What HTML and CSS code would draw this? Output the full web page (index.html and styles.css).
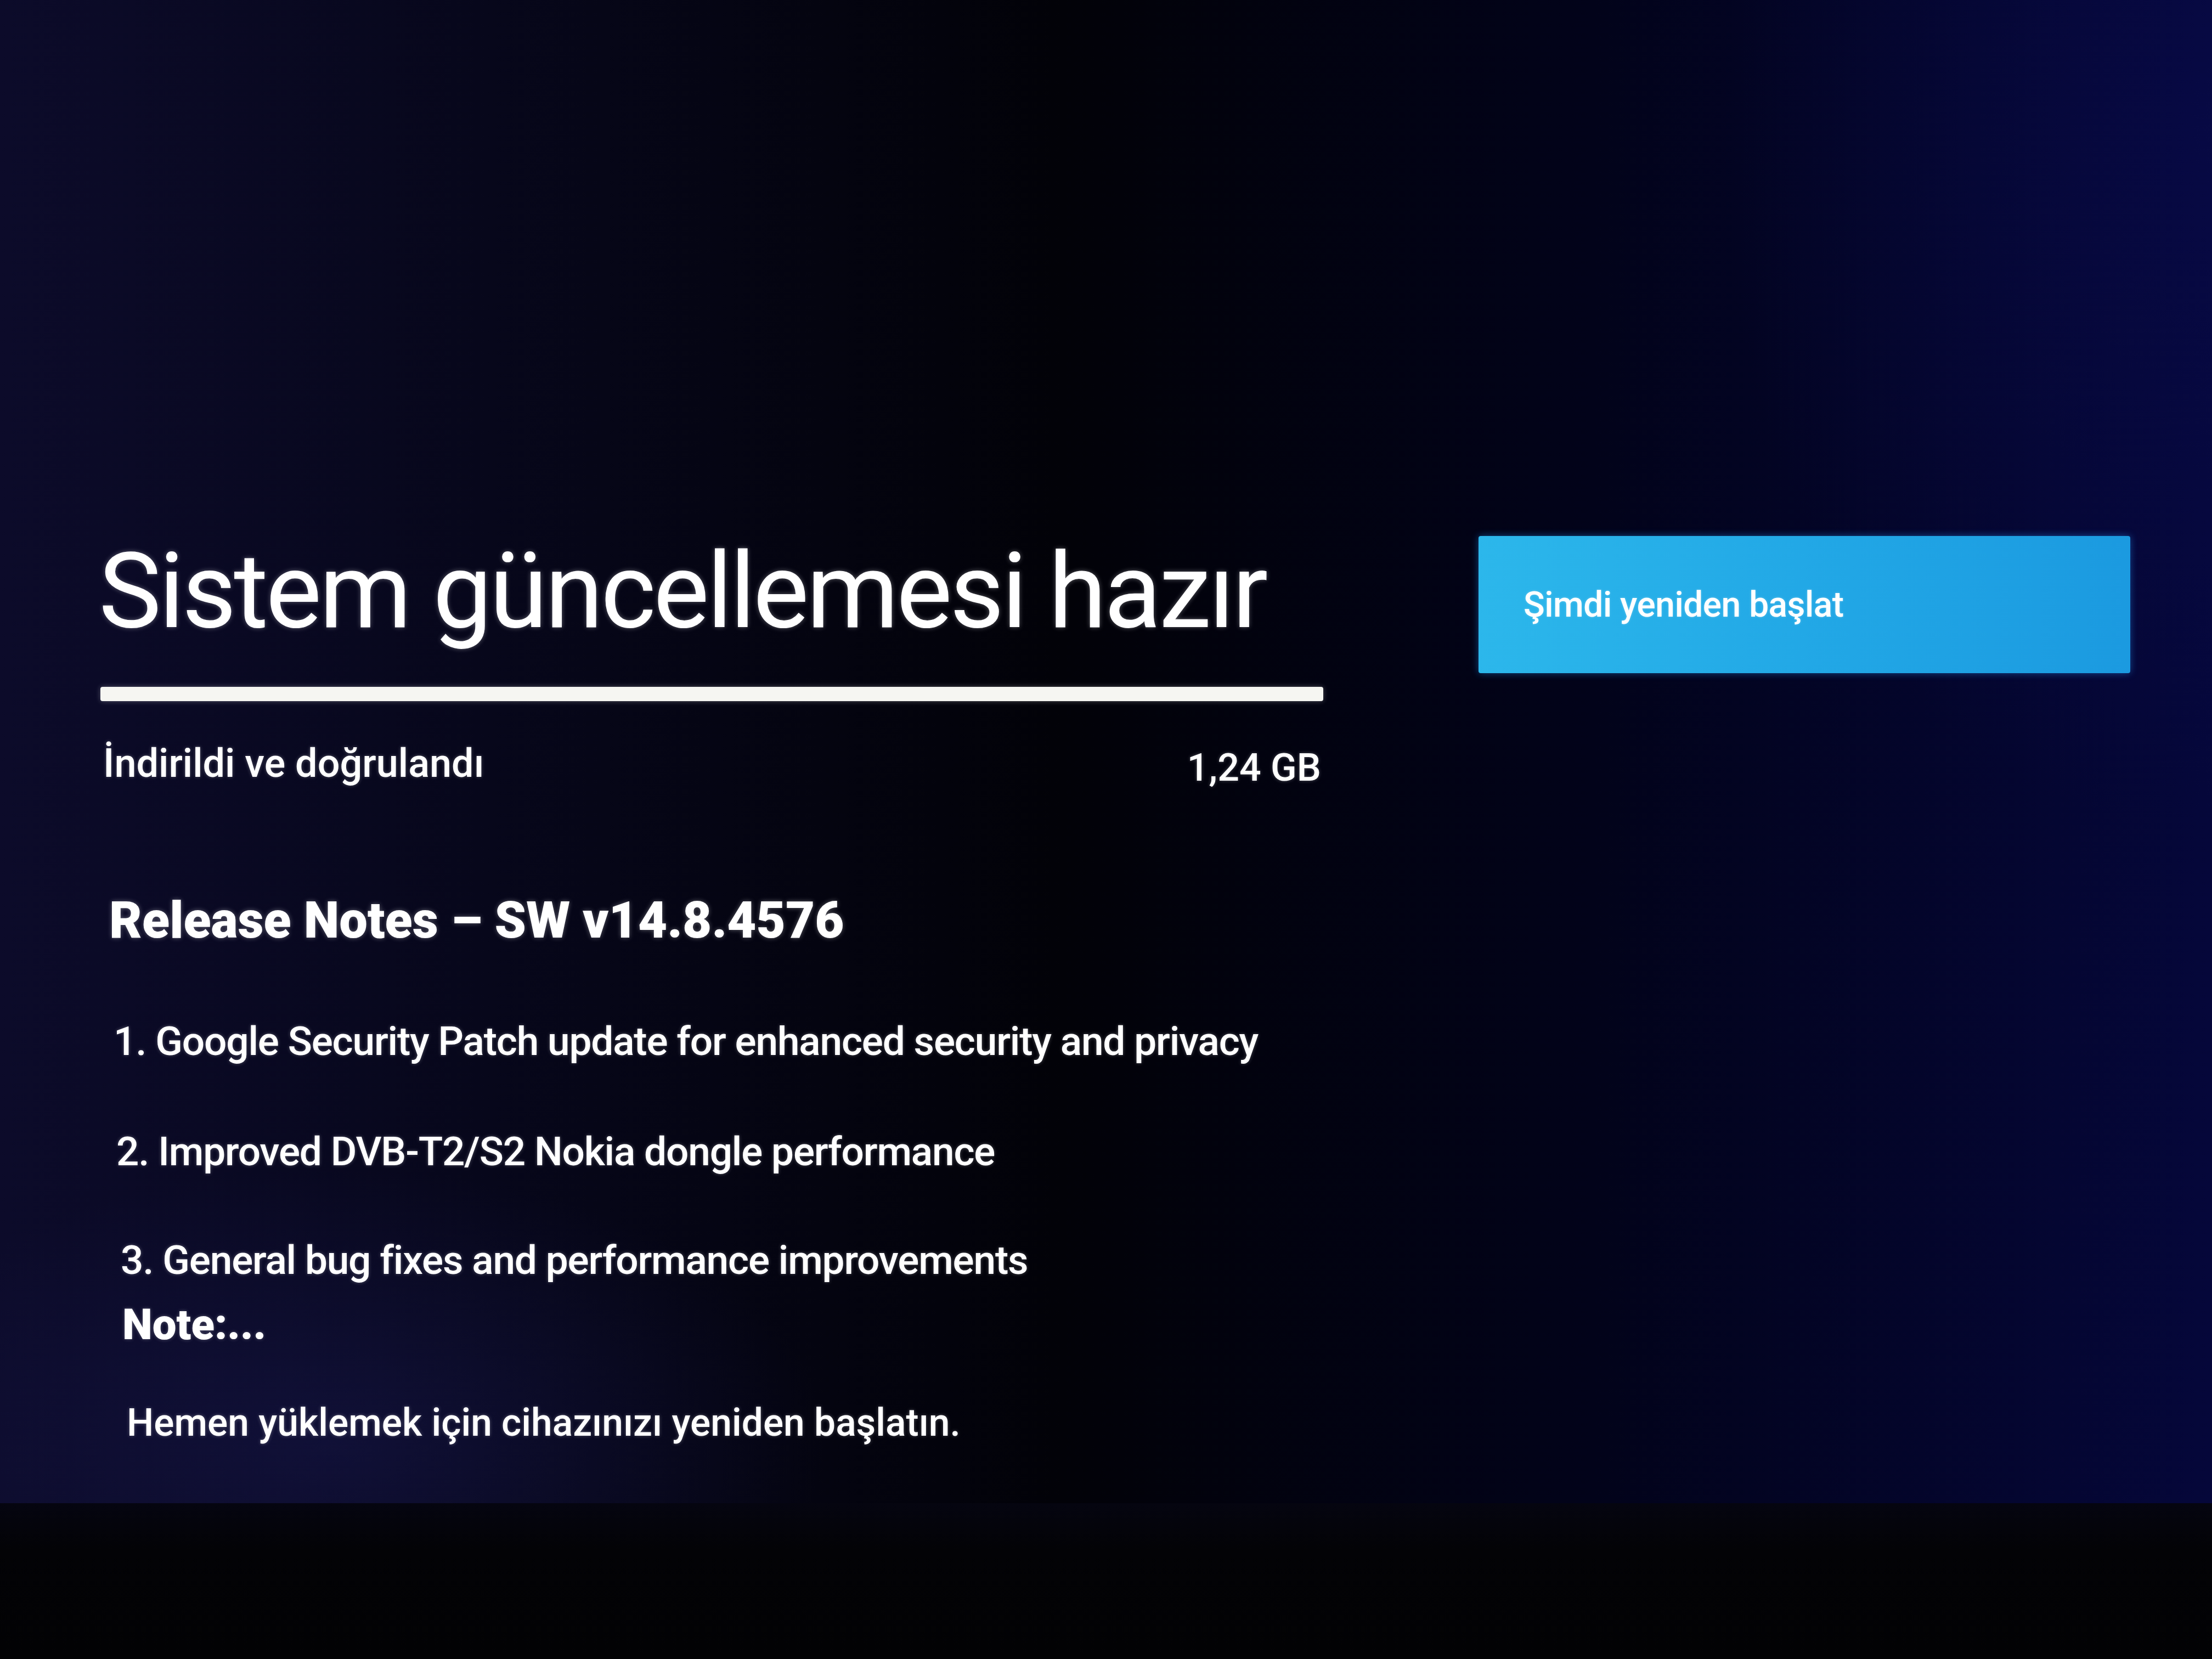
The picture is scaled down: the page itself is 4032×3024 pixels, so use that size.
FILE: index.html
```html
<!DOCTYPE html>
<html lang="tr">
<head>
<meta charset="utf-8">
<title>Sistem güncellemesi hazır</title>
<link rel="stylesheet" href="styles.css">
</head>
<body>
<div class="screen">
  <section class="main">
    <h1 class="title">Sistem güncellemesi hazır</h1>
    <div class="progress"></div>
    <div class="status">
      <span class="status-label">İndirildi ve doğrulandı</span>
      <span class="status-size">1,24 GB</span>
    </div>
    <h2 class="notes-title">Release Notes – SW v14.8.4576</h2>
    <p class="item item-1">1. Google Security Patch update for enhanced security and privacy</p>
    <p class="item item-2">2. Improved DVB-T2/S2 Nokia dongle performance</p>
    <p class="item item-3">3. General bug fixes and performance improvements</p>
    <p class="note">Note:...</p>
    <p class="hint">Hemen yüklemek için cihazınızı yeniden başlatın.</p>
  </section>
  <aside class="actions">
    <div class="button">Şimdi yeniden başlat</div>
  </aside>
</div>
<div class="bezel"></div>
</body>
</html>
```
FILE: styles.css
```css
html, body {
  margin: 0;
  padding: 0;
}
body {
  width: 4032px;
  height: 3024px;
  overflow: hidden;
  background: #030306;
  font-family: Roboto, "Noto Sans", sans-serif;
  color: #ffffff;
}
.screen {
  height: 2740px;
  display: flex;
  padding-left: 180px;
  gap: 283px;
  box-sizing: border-box;
  background:
    radial-gradient(ellipse 900px 500px at 15% 96%, rgba(28, 28, 90, 0.4), rgba(0,0,0,0) 100%),
    radial-gradient(ellipse 900px 1300px at 100% 8%, rgba(10, 12, 80, 0.45), rgba(0,0,0,0) 100%),
    linear-gradient(90deg, #0c0b2a 0%, #07071b 22%, #020208 48%, #02031a 72%, #05073a 100%);
}
.main {
  width: 2232px;
  display: flex;
  flex-direction: column;
  padding-top: 982px;
}
.title {
  margin: 0;
  font-family: Roboto, "Noto Sans", sans-serif;
  font-weight: 400;
  font-size: 192px;
  line-height: 1;
  letter-spacing: -4.5px;
  white-space: nowrap;
  text-shadow: 0 0 8px rgba(255,255,255,0.35);
}
.progress {
  margin-top: 78px;
  height: 26px;
  margin-left: 3px;
  border-radius: 4px;
  background: #f6f6f2;
  box-shadow: 0 0 10px rgba(255,255,255,0.3);
}
.status {
  margin-top: 78px;
  margin-left: 8px;
  display: flex;
  justify-content: space-between;
  font-size: 70px;
  font-weight: 500;
  line-height: 1;
  text-shadow: 0 0 6px rgba(255,255,255,0.3);
}
.status-label {
  font-size: 72px;
}
.status-size {
  margin-right: 4px;
  margin-top: 8px;
}
.notes-title {
  margin: 198px 0 0 19px;
  font-size: 92px;
  font-weight: 900;
  line-height: 1;
  letter-spacing: 0;
  white-space: nowrap;
  text-shadow: 0 0 8px rgba(255,255,255,0.35);
}
.item, .note, .hint {
  margin: 0;
  white-space: nowrap;
  line-height: 1;
  text-shadow: 0 0 6px rgba(255,255,255,0.3);
}
.item {
  font-size: 73px;
  font-weight: 500;
  letter-spacing: -1.2px;
}
.item-1 { margin: 138px 0 0 27px; }
.item-2 { margin: 128px 0 0 32px; }
.item-3 { margin: 125px 0 0 40px; }
.note {
  margin: 42px 0 0 43px;
  font-size: 78px;
  font-weight: 900;
}
.hint {
  margin: 105px 0 0 51px;
  font-size: 69.5px;
  font-weight: 500;
}
.actions {
  padding-top: 977px;
}
.button {
  width: 1188px;
  height: 250px;
  box-sizing: border-box;
  padding-left: 82px;
  display: flex;
  align-items: center;
  font-size: 64px;
  font-weight: 500;
  letter-spacing: -0.5px;
  border-radius: 4px;
  background: linear-gradient(90deg, #2cb7eb 0%, #22a8e6 50%, #1b9ae0 100%);
  box-shadow: 0 0 14px rgba(40, 150, 255, 0.45);
  text-shadow: 0 0 4px rgba(255,255,255,0.3);
}
.bezel {
  height: 284px;
  background: linear-gradient(180deg, #050510 0%, #030306 30%, #020204 100%);
}
```
